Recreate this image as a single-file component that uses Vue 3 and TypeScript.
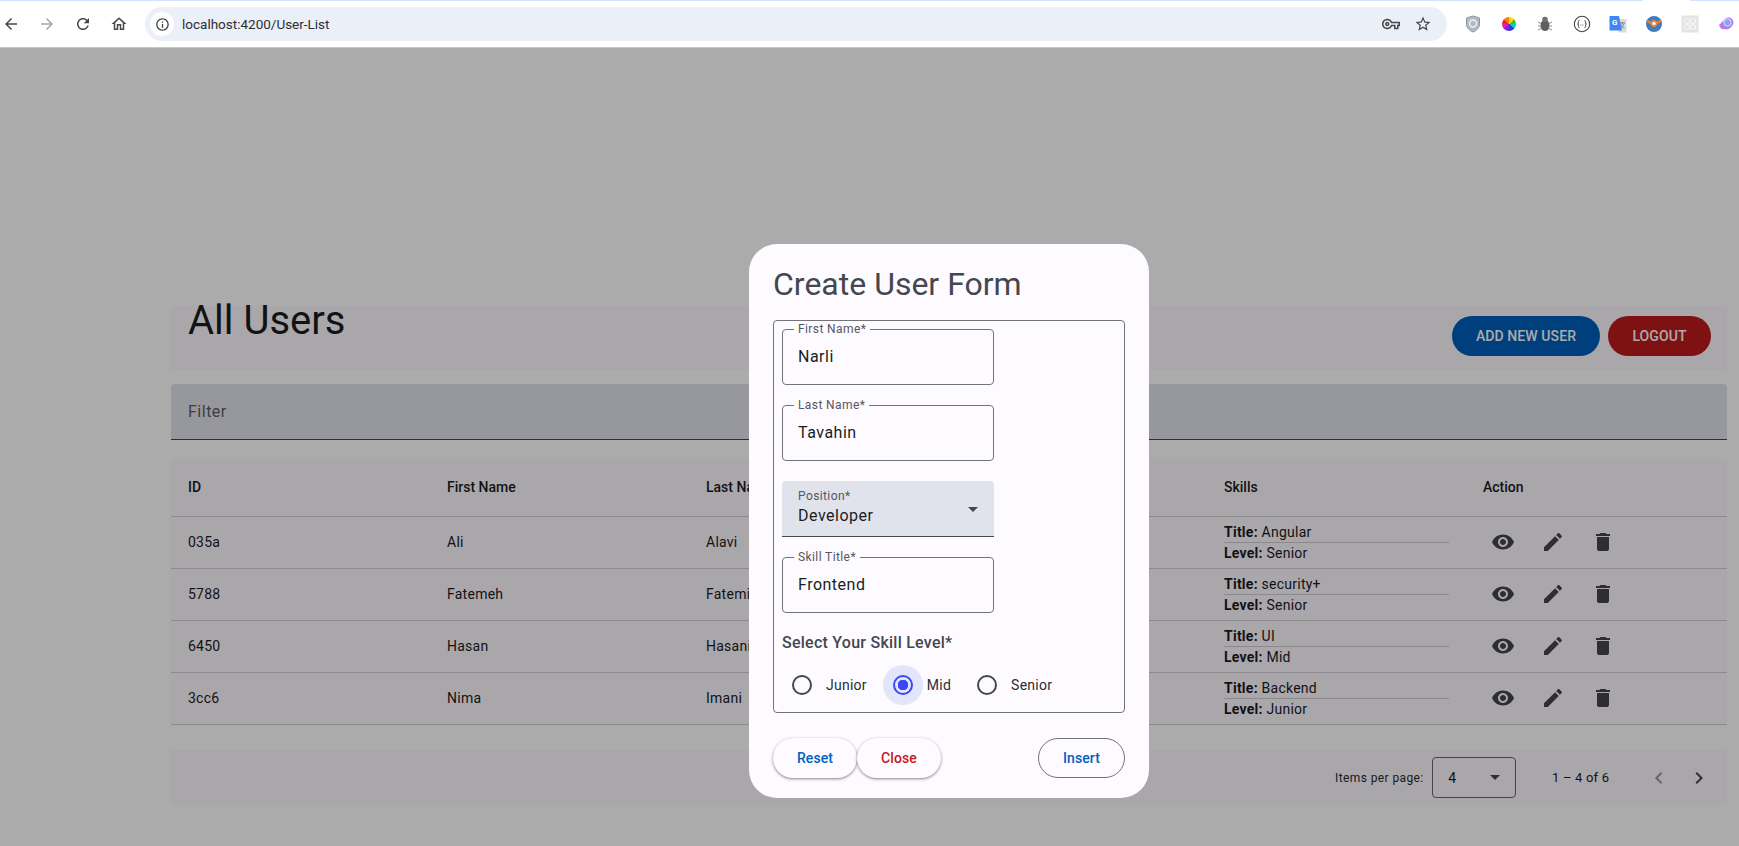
<script setup lang="ts">
interface UserRow {
  id: string
  firstName: string
  lastName: string
  title: string
  level: string
}

const users: UserRow[] = [
  { id: '035a', firstName: 'Ali', lastName: 'Alavi', title: 'Angular', level: 'Senior' },
  { id: '5788', firstName: 'Fatemeh', lastName: 'Fatemi', title: 'security+', level: 'Senior' },
  { id: '6450', firstName: 'Hasan', lastName: 'Hasani', title: 'UI', level: 'Mid' },
  { id: '3cc6', firstName: 'Nima', lastName: 'Imani', title: 'Backend', level: 'Junior' },
]

const textFields = {
  first: { label: 'First Name*', value: 'Narli' },
  last: { label: 'Last Name*', value: 'Tavahin' },
  skill: { label: 'Skill Title*', value: 'Frontend' },
}

const levels = ['Junior', 'Mid', 'Senior']
const selectedLevel = 'Mid'
</script>

<template>
  <div class="screen">
    <header class="chrome">
      <div class="tab-strip">
        <span class="strip-a"></span>
        <span class="strip-b"></span>
      </div>
      <div class="toolbar">
        <div class="nav-icons">
          <svg viewBox="0 0 24 24" class="nav"><path d="M20 11H7.83l5.59-5.59L12 4l-8 8 8 8 1.41-1.41L7.83 13H20v-2z" /></svg>
          <svg viewBox="0 0 24 24" class="nav off"><path d="M12 4l-1.41 1.41L16.17 11H4v2h12.17l-5.58 5.59L12 20l8-8z" /></svg>
          <svg viewBox="0 0 24 24" class="nav"><path d="M17.65 6.35C16.2 4.9 14.21 4 12 4c-4.42 0-7.99 3.58-7.99 8s3.57 8 7.99 8c3.73 0 6.84-2.55 7.73-6h-2.08c-.82 2.33-3.04 4-5.65 4-3.31 0-6-2.69-6-6s2.69-6 6-6c1.66 0 3.14.69 4.22 1.78L13 11h7V4l-2.35 2.35z" /></svg>
          <svg viewBox="0 0 24 24" class="nav"><path d="M12 5.69l5 4.5V18h-2v-6H9v6H7v-7.81l5-4.5M12 3L2 12h3v8h6v-6h2v6h6v-8h3L12 3z" /></svg>
        </div>
        <div class="omnibox">
          <span class="site-info">
            <svg viewBox="0 0 24 24"><path d="M11 7h2v2h-2zm0 4h2v6h-2zm1-9C6.48 2 2 6.48 2 12s4.48 10 10 10 10-4.48 10-10S17.52 2 12 2zm0 18c-4.41 0-8-3.59-8-8s3.59-8 8-8 8 3.59 8 8-3.59 8-8 8z" /></svg>
          </span>
          <span class="url">localhost:4200/User-List</span>
          <svg viewBox="0 0 24 24" class="omni-icon key"><path d="M22 19h-6v-4h-2.68c-1.14 2.42-3.6 4-6.32 4-3.86 0-7-3.14-7-7s3.14-7 7-7c2.72 0 5.17 1.58 6.32 4H24v6h-2v4zm-4-2h2v-4h2v-2H11.94l-.23-.67C11.01 8.34 9.11 7 7 7c-2.76 0-5 2.24-5 5s2.24 5 5 5c2.11 0 4.01-1.34 4.71-3.33l.23-.67H18v4zM7 15c-1.65 0-3-1.35-3-3s1.35-3 3-3 3 1.35 3 3-1.35 3-3 3zm0-4c-.55 0-1 .45-1 1s.45 1 1 1 1-.45 1-1-.45-1-1-1z" /></svg>
          <svg viewBox="0 0 24 24" class="omni-icon star"><path d="M22 9.24l-7.19-.62L12 2 9.19 8.63 2 9.24l5.46 4.73L5.82 21 12 17.27 18.18 21l-1.63-7.03L22 9.24zM12 15.4l-3.76 2.27 1-4.28-3.32-2.88 4.38-.38L12 6.1l1.71 4.04 4.38.38-3.32 2.88 1 4.28L12 15.4z" /></svg>
        </div>
        <div class="extensions">
          <svg viewBox="0 0 18 18" class="ext">
            <path d="M9 1l6.5 2v6c0 4-3 6.6-6.5 8-3.500-1.400-6.500-4-6.500-8V3z" fill="#b4bac6" stroke="#8d94a0" />
            <circle cx="9" cy="8.500" r="3.500" fill="none" stroke="#eef0f4" stroke-width="1.500" />
          </svg>
          <span class="ext wheel"></span>
          <svg viewBox="0 0 18 18" class="ext">
            <ellipse cx="9" cy="10.500" rx="4.500" ry="5.500" fill="#5f5f5f" />
            <circle cx="9" cy="4.500" r="2.800" fill="#6e6e6e" />
            <path d="M2 7l3 1.500M2 11h2.500M2 15l3-1.500M16 7l-3 1.500M16 11h-2.500M16 15l-3-1.500" stroke="#8a8a8a" fill="none" />
          </svg>
          <svg viewBox="0 0 18 18" class="ext">
            <circle cx="9" cy="9" r="7.700" fill="none" stroke="#444" stroke-width="1.100" />
            <path d="M6.500 5.500c-1.500 0-1 1.500-1 2.500 0 .6-.5 1-1 1 .5 0 1 .4 1 1 0 1-.5 2.500 1 2.500M11.500 5.500c1.500 0 1 1.500 1 2.500 0 .6.5 1 1 1-.5 0-1 .4-1 1 0 1 .5 2.500-1 2.500M7.500 10h.8M9.500 10h.8" fill="none" stroke="#444" />
          </svg>
          <svg viewBox="0 0 18 18" class="ext">
            <path d="M7 4h10.500v13.500H9.500z" fill="#d9dcdf" />
            <path d="M11 8h5M13.500 7v1.200M15 8.500c-.8 2.500-2 3.800-3.500 4.800M12 9.500c.6 1.500 1.800 3 3.500 3.800" stroke="#7b7f85" fill="none" />
            <path d="M.5 1h9.500l3 14.500H.5z" fill="#4285f4" />
            <text x="3" y="9.500" class="ext-g">G</text>
          </svg>
          <svg viewBox="0 0 18 18" class="ext">
            <circle cx="9" cy="9" r="8" fill="#3f7cc0" />
            <path d="M1.500 5.500L6 8a3.500 3.500 0 0 0 6 0l4.500-2.500" fill="none" stroke="#ef7f2e" stroke-width="2.300" />
            <circle cx="9" cy="8.500" r="2.600" fill="#f4f4f4" stroke="#ef7f2e" stroke-width="1.600" />
          </svg>
          <svg viewBox="0 0 18 18" class="ext">
            <rect x="0.500" y="0.500" width="17" height="17" fill="#e4e4e4" />
            <g fill="none" stroke="#f6f6f6" stroke-width="1.200">
              <circle cx="6" cy="6" r="2.500" />
              <circle cx="12" cy="6" r="2.500" />
              <circle cx="6" cy="12" r="2.500" />
              <circle cx="12" cy="12" r="2.500" />
            </g>
          </svg>
          <svg viewBox="0 0 18 18" class="ext">
            <path d="M2 10l6-6c2-2 5-2 7 0s2 5 0 7c-2 3-5 4-8 3-1 .5-3 1-5-4z" fill="#b57bee" />
            <circle cx="10.500" cy="7.500" r="3.600" fill="#7fa6f5" stroke="#eadcfb" />
          </svg>
        </div>
      </div>
    </header>

    <main class="page">
      <section class="title-card">
        <h1>All Users</h1>
        <div class="title-actions">
          <button class="pill add">ADD NEW USER</button>
          <button class="pill logout">LOGOUT</button>
        </div>
      </section>

      <div class="filter"><span>Filter</span></div>

      <table class="users">
        <thead>
          <tr>
            <th>ID</th>
            <th>First Name</th>
            <th>Last Name</th>
            <th></th>
            <th>Skills</th>
            <th>Action</th>
          </tr>
        </thead>
        <tbody>
          <tr v-for="user in users" :key="user.id">
            <td>{{ user.id }}</td>
            <td>{{ user.firstName }}</td>
            <td>{{ user.lastName }}</td>
            <td></td>
            <td>
              <div class="skill skill-title"><b>Title:</b> {{ user.title }}</div>
              <div class="skill"><b>Level:</b> {{ user.level }}</div>
            </td>
            <td>
              <div class="actions">
                <svg viewBox="0 0 24 24"><path d="M12 4.500C7 4.500 2.730 7.610 1 12c1.730 4.390 6 7.500 11 7.500s9.270-3.110 11-7.500c-1.730-4.390-6-7.500-11-7.500zM12 17c-2.760 0-5-2.240-5-5s2.240-5 5-5 5 2.240 5 5-2.240 5-5 5zm0-8c-1.660 0-3 1.340-3 3s1.340 3 3 3 3-1.340 3-3-1.340-3-3-3z" /></svg>
                <svg viewBox="0 0 24 24"><path d="M3 17.250V21h3.750L17.810 9.940l-3.750-3.750L3 17.250zM20.710 7.040c.39-.39.39-1.020 0-1.410l-2.340-2.340c-.39-.39-1.020-.39-1.410 0l-1.830 1.830 3.750 3.750 1.830-1.830z" /></svg>
                <svg viewBox="0 0 24 24"><path d="M6 19c0 1.100.9 2 2 2h8c1.100 0 2-.9 2-2V7H6v12zM19 4h-3.500l-1-1h-5l-1 1H5v2h14V4z" /></svg>
              </div>
            </td>
          </tr>
        </tbody>
      </table>

      <div class="paginator">
        <span class="per-page">Items per page:</span>
        <div class="page-size">
          <span>4</span>
          <i class="caret"></i>
        </div>
        <span class="range">1 – 4 of 6</span>
        <svg viewBox="0 0 24 24" class="pager off"><path d="M15.410 7.410L14 6l-6 6 6 6 1.410-1.410L10.830 12z" /></svg>
        <svg viewBox="0 0 24 24" class="pager"><path d="M10 6L8.590 7.410 13.170 12l-4.580 4.580L10 18l6-6z" /></svg>
      </div>

      <div class="overlay">
        <div class="dialog">
          <h2>Create User Form</h2>
          <div class="form-box">
            <div class="field">
              <label>{{ textFields.first.label }}</label>
              <span>{{ textFields.first.value }}</span>
            </div>
            <div class="field">
              <label>{{ textFields.last.label }}</label>
              <span>{{ textFields.last.value }}</span>
            </div>
            <div class="select-field">
              <label>Position*</label>
              <span>Developer</span>
              <i class="caret"></i>
            </div>
            <div class="field">
              <label>{{ textFields.skill.label }}</label>
              <span>{{ textFields.skill.value }}</span>
            </div>
            <div class="level-title">Select Your Skill Level*</div>
            <div class="levels">
              <div v-for="level in levels" :key="level" class="level">
                <span class="radio-wrap" :class="{ on: level === selectedLevel }">
                  <span class="radio"></span>
                </span>
                <span class="level-name">{{ level }}</span>
              </div>
            </div>
          </div>
          <div class="dialog-actions">
            <button class="action raised blue">Reset</button>
            <button class="action raised red">Close</button>
            <button class="action outlined blue">Insert</button>
          </div>
        </div>
      </div>
    </main>
  </div>
</template>

<style>
html,
body {
  margin: 0;
  background: #fff;
}
</style>

<style scoped>
.screen {
  width: 1739px;
  height: 846px;
  overflow: hidden;
  font-family: Roboto, "Liberation Sans", sans-serif;
  color: #1a1b1f;
}

.chrome {
  height: 48px;
  box-sizing: border-box;
  border-bottom: 1px solid #c6c6c6;
  background: #fff;
}

.tab-strip {
  height: 1px;
  display: flex;
  justify-content: space-between;
}

.strip-a {
  width: 1643px;
  background: #d3e3fd;
}

.strip-b {
  width: 49px;
  background: #d3e3fd;
}

.toolbar {
  display: flex;
  align-items: center;
  height: 46px;
}

.nav-icons {
  display: flex;
  width: 145px;
  padding-left: 2px;
  box-sizing: border-box;
  gap: 18px;
}

.nav {
  width: 18px;
  height: 18px;
  fill: #474747;
}

.nav.off {
  fill: #a8a8a8;
}

.omnibox {
  width: 1302px;
  height: 34px;
  border-radius: 17px;
  background: #ebeff8;
  display: flex;
  align-items: center;
  box-sizing: border-box;
  padding-left: 5px;
}

.site-info {
  width: 24px;
  height: 24px;
  border-radius: 50%;
  background: #fff;
  display: flex;
  align-items: center;
  justify-content: center;
}

.site-info svg {
  width: 15px;
  height: 15px;
  fill: #3c3c3c;
}

.url {
  margin-left: 8px;
  font-size: 13.500px;
  color: #2c2e33;
  flex: 1;
}

.omni-icon {
  width: 18px;
  height: 18px;
  fill: #474747;
}

.key {
  margin-right: 14px;
}

.star {
  margin-right: 15px;
}

.extensions {
  display: flex;
  align-items: center;
  gap: 18.200px;
  padding-left: 17px;
}

.ext {
  width: 18px;
  height: 18px;
  display: block;
}

.ext-g {
  font-family: Roboto, sans-serif;
  font-size: 8px;
  font-weight: 700;
  fill: #fff;
}

.wheel {
  width: 14px;
  height: 14px;
  margin: 0 2px;
  border-radius: 50%;
  background: conic-gradient(#ffd800 0 45deg, #35c42a 45deg 90deg, #12c6d4 90deg 135deg, #1f3fe0 135deg 180deg, #8a22d6 180deg 225deg, #e81fa2 225deg 270deg, #ee2424 270deg 315deg, #ff7a10 315deg 360deg);
}

.page {
  position: relative;
  height: 798px;
  box-sizing: border-box;
  padding: 258px 12px 0 171px;
  background: #fff;
}

.title-card {
  height: 64px;
  display: flex;
  justify-content: space-between;
  align-items: flex-start;
  padding: 0 16px 0 17px;
  background: #fef9ff;
}

h1 {
  margin: 0;
  padding-top: 1px;
  font-size: 40px;
  font-weight: 400;
  line-height: 28px;
  color: #1a1b1f;
}

.title-actions {
  display: flex;
  gap: 8px;
  margin-top: 10px;
}

.pill {
  height: 40px;
  padding: 0 0 1px;
  border: 0;
  border-radius: 20px;
  font-family: inherit;
  font-size: 14px;
  font-weight: 500;
  letter-spacing: 0.1px;
  color: #fff;
}

.add {
  width: 148px;
  background: #005ebd;
}

.logout {
  width: 103px;
  background: #bc1b1b;
}

.filter {
  margin-top: 14px;
  height: 56px;
  box-sizing: border-box;
  padding-left: 17px;
  display: flex;
  align-items: center;
  border-radius: 4px 4px 0 0;
  border-bottom: 1px solid #44474e;
  background: #e2e1ec;
  font-size: 16px;
  letter-spacing: 0.5px;
  color: #5a5c66;
}

.users {
  margin-top: 19px;
  width: 100%;
  table-layout: fixed;
  border-collapse: collapse;
  background: #fef9ff;
  font-size: 14px;
}

.users th {
  width: 225px;
  height: 55px;
  padding: 0 17px 2px;
  box-sizing: content-box;
  text-align: left;
  font-weight: 500;
  border-bottom: 1px solid #d1ced4;
}

.users th:last-child {
  width: auto;
}

.users td {
  height: 52px;
  padding: 0 17px 1px;
  box-sizing: border-box;
  letter-spacing: 0.25px;
  border-bottom: 1px solid #d1ced4;
}

.skill {
  line-height: 20px;
}

.skill-title {
  border-bottom: 1px solid #cfccd2;
}

.actions {
  display: flex;
  gap: 26px;
  padding-left: 8px;
}

.actions svg {
  width: 24px;
  height: 24px;
  fill: #44444c;
}

.paginator {
  margin-top: 25px;
  height: 55px;
  display: flex;
  align-items: center;
  background: #fef9ff;
  padding-left: 1164px;
  font-size: 12px;
}

.per-page {
  letter-spacing: 0.4px;
  color: #2a2a2e;
  width: 98px;
}

.page-size {
  width: 84px;
  height: 41px;
  box-sizing: border-box;
  border: 1px solid #66666b;
  border-radius: 4px;
  display: flex;
  align-items: center;
  justify-content: space-between;
  padding: 0 15px 0 15px;
  font-size: 14px;
}

.range {
  margin-left: 36px;
  width: 89px;
  font-size: 13px;
  letter-spacing: 0.2px;
}

.pager {
  width: 24px;
  height: 24px;
  fill: #44444c;
  margin-right: 16px;
}

.pager.off {
  fill: #9a9a9f;
  margin-left: 7px;
}

.caret {
  width: 0;
  height: 0;
  border-left: 5px solid transparent;
  border-right: 5px solid transparent;
  border-top: 5px solid #44474e;
}

.overlay {
  position: absolute;
  inset: 0;
  display: flex;
  justify-content: center;
  align-items: flex-start;
  box-sizing: border-box;
  padding: 196px 0 0 159px;
  background: rgba(0, 0, 0, 0.33);
}

.dialog {
  width: 400px;
  height: 554px;
  box-sizing: border-box;
  padding: 0 24px;
  border-radius: 28px;
  background: #fdfbff;
}

h2 {
  margin: 0;
  padding-top: 20px;
  height: 76px;
  box-sizing: border-box;
  font-size: 32px;
  line-height: 40px;
  font-weight: 400;
  color: #44474e;
}

.form-box {
  height: 393px;
  box-sizing: border-box;
  padding: 8px;
  border: 1px solid #72727a;
  border-radius: 4px;
  color: #1a1b1f;
}

.field {
  position: relative;
  width: 212px;
  height: 56px;
  box-sizing: border-box;
  margin-bottom: 20px;
  padding: 15px 15px 0;
  border: 1px solid #72727a;
  border-radius: 4px;
  font-size: 16px;
  line-height: 24px;
  letter-spacing: 0.5px;
}

.field label {
  position: absolute;
  top: -8px;
  left: 11px;
  padding: 0 4px;
  background: #fdfbff;
  font-size: 12px;
  line-height: 14px;
  letter-spacing: 0.4px;
  color: #55575e;
}

.select-field {
  position: relative;
  width: 212px;
  height: 56px;
  box-sizing: border-box;
  margin-bottom: 20px;
  padding: 7px 16px 0;
  border-bottom: 1px solid #44474e;
  border-radius: 4px 4px 0 0;
  background: #e0e3eb;
  font-size: 16px;
  line-height: 24px;
  letter-spacing: 0.5px;
  display: flex;
  flex-direction: column;
}

.select-field label {
  font-size: 12px;
  line-height: 16px;
  letter-spacing: 0.4px;
  color: #55575e;
}

.select-field .caret {
  position: absolute;
  right: 16px;
  top: 26px;
}

.level-title {
  margin-top: -2px;
  height: 24px;
  line-height: 24px;
  font-size: 16px;
  font-weight: 500;
  letter-spacing: 0.25px;
  color: #44474e;
}

.levels {
  display: flex;
  margin-top: 10px;
}

.level {
  display: flex;
  align-items: center;
  font-size: 14px;
  letter-spacing: 0.25px;
  color: #2c2d32;
}

.radio-wrap {
  width: 40px;
  height: 40px;
  border-radius: 50%;
  display: flex;
  align-items: center;
  justify-content: center;
}

.radio {
  width: 20px;
  height: 20px;
  box-sizing: border-box;
  border: 2px solid #44474e;
  border-radius: 50%;
}

.radio-wrap.on {
  background: #e3e5fc;
}

.radio-wrap.on .radio {
  border-color: #3a49f5;
  background: radial-gradient(circle, #3a49f5 0 5px, transparent 5.500px);
}

.level-name {
  padding: 0 16px 0 4px;
}

.dialog-actions {
  display: flex;
  margin-top: 25px;
}

.action {
  height: 40px;
  width: 84px;
  border-radius: 20px;
  font-family: inherit;
  font-size: 14px;
  font-weight: 500;
  letter-spacing: 0.1px;
  background: #fdfbff;
}

.raised {
  border: 0;
  box-shadow: 0 1px 2px rgba(0, 0, 0, 0.3), 0 1px 3px 1px rgba(0, 0, 0, 0.15);
}

.outlined {
  margin-left: auto;
  width: 87px;
  border: 1px solid #72727a;
}

.blue {
  color: #0061c0;
}

.red {
  color: #c5191b;
}
</style>
